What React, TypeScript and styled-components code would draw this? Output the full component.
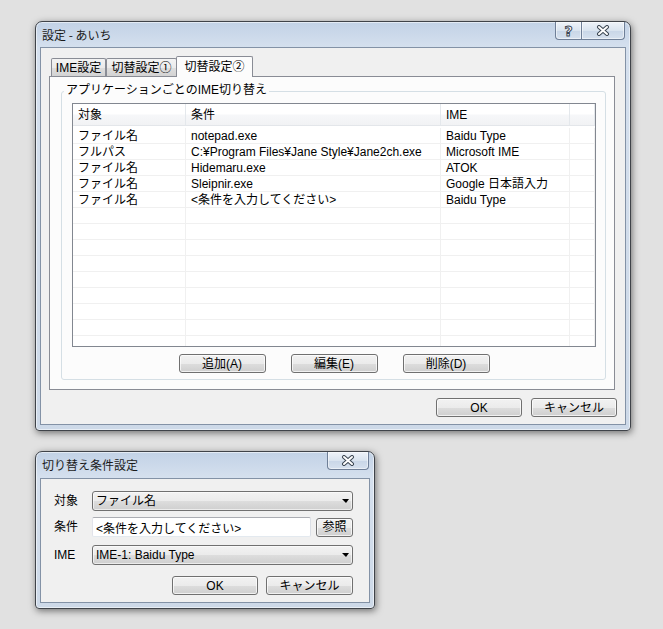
import React from "react";
import styled, { createGlobalStyle } from "styled-components";

const GlobalStyle = createGlobalStyle`
  * { box-sizing: border-box; }
  html, body { margin: 0; padding: 0; background: #e1e1e1; }
  body {
    font-family: "Liberation Sans", "Noto Sans CJK JP", sans-serif;
    font-size: 12px;
    line-height: 14px;
    color: #000;
  }
`;

const Desktop = styled.div`
  min-height: 629px;
  padding: 21px 0 0 35px;
  display: flex;
  flex-direction: column;
  align-items: flex-start;
  gap: 20px;
`;

const Window = styled.div<{ $width: number; $height: number }>`
  width: ${(p) => p.$width}px;
  height: ${(p) => p.$height}px;
  flex: none;
  display: flex;
  flex-direction: column;
  padding: 0 4px 5px;
  border: 1px solid #3f4349;
  border-radius: 7px 7px 4px 4px;
  background: linear-gradient(to bottom, #c2d2e6 0px, #d5e0ee 26px, #cdd9e8 100%);
  box-shadow: inset 0 0 0 1px rgba(255, 255, 255, 0.55), 1px 2px 7px rgba(0, 0, 0, 0.5);
`;

const TitleBar = styled.div<{ $height: number }>`
  height: ${(p) => p.$height}px;
  flex: none;
  display: flex;
  align-items: center;
`;

const Title = styled.div`
  flex: 1;
  padding-left: 2px;
  font-family: "Noto Sans CJK JP", sans-serif;
  font-size: 12px;
  line-height: 16px;
  color: #1b1b1b;
`;

const Captions = styled.div`
  align-self: flex-start;
  display: flex;
  margin-right: 1px;
`;

const CaptionButton = styled.div<{ $width: number; $round: "left" | "right" | "both" }>`
  width: ${(p) => p.$width}px;
  height: 18px;
  display: flex;
  align-items: center;
  justify-content: center;
  border: 1px solid #6f7f97;
  border-top: none;
  border-left-width: ${(p) => (p.$round === "right" ? 0 : 1)}px;
  border-radius: ${(p) =>
    p.$round === "left" ? "0 0 0 4px" : p.$round === "right" ? "0 0 4px 0" : "0 0 4px 4px"};
  background: linear-gradient(to bottom, #eef3f9 0%, #dae4ef 50%, #c9d6e7 51%, #d6e1ee 100%);
  box-shadow: inset 0 0 0 1px rgba(255, 255, 255, 0.5);
`;

const HelpGlyph = styled.span`
  font-family: "DejaVu Sans", sans-serif;
  font-weight: bold;
  font-size: 14px;
  line-height: 14px;
  color: #fff;
  -webkit-text-stroke: 1px #3d4754;
`;

const Client = styled.div<{ $pad: string }>`
  flex: 1;
  min-height: 0;
  display: flex;
  flex-direction: column;
  background: #f0f0f0;
  border: 1px solid #8392a6;
  padding: ${(p) => p.$pad};
`;

const TabStrip = styled.div`
  height: 20px;
  flex: none;
  display: flex;
  align-items: flex-end;
  padding-left: 2px;
`;

const Tab = styled.div<{ $active?: boolean; $width: number }>`
  width: ${(p) => p.$width}px;
  height: ${(p) => (p.$active ? 21 : 18)}px;
  margin-bottom: ${(p) => (p.$active ? -1 : 0)}px;
  margin-left: ${(p) => (p.$active ? -1 : 0)}px;
  padding-top: ${(p) => (p.$active ? 0 : 1)}px;
  position: relative;
  z-index: ${(p) => (p.$active ? 1 : 0)};
  display: flex;
  align-items: center;
  justify-content: center;
  border: 1px solid #898c95;
  border-bottom: none;
  border-radius: 2px 2px 0 0;
  white-space: nowrap;
  background: ${(p) =>
    p.$active
      ? "#fcfcfc"
      : "linear-gradient(to bottom, #f3f3f3 0%, #ebebeb 50%, #dedede 51%, #d3d3d3 100%)"};
`;

const TabPanel = styled.div`
  flex: 1;
  min-height: 0;
  display: flex;
  flex-direction: column;
  margin-right: 2px;
  border: 1px solid #898c95;
  background: #fcfcfc;
  padding: 14px 8px 9px 11px;
`;

const GroupBox = styled.div`
  flex: 1;
  min-height: 0;
  display: flex;
  flex-direction: column;
  border: 1px solid #d5dfe5;
  border-radius: 3px;
  padding: 0 9px 6px 2px;
`;

const GroupLabel = styled.div`
  align-self: flex-start;
  margin-top: -9px;
  padding: 0 2px;
  line-height: 14px;
  background: #fcfcfc;
`;

const ListView = styled.div`
  flex: 1;
  min-height: 0;
  margin: 6px 0 0 8px;
  display: flex;
  flex-direction: column;
  border: 1px solid #828790;
  background: #fff;
  overflow: hidden;
`;

const columns = "113px 255px 129px 1fr";

const HeaderRow = styled.div`
  height: 22px;
  flex: none;
  display: grid;
  grid-template-columns: ${columns};
  background: linear-gradient(to bottom, #ffffff 0%, #ffffff 45%, #f6f7f9 55%, #f1f2f4 100%);
  border-bottom: 1px solid #e3e6ea;
`;

const HeaderCell = styled.div`
  display: flex;
  align-items: center;
  padding-left: 5px;
  border-right: 1px solid #e4e8ec;
`;

const Body = styled.div`
  flex: 1;
  min-height: 0;
  padding-top: 2px;
  overflow: hidden;
`;

const Row = styled.div`
  height: 16px;
  display: grid;
  grid-template-columns: ${columns};
  border-bottom: 1px solid #f0f0f0;
`;

const Cell = styled.div`
  padding-left: 5px;
  line-height: 16px;
  white-space: nowrap;
  overflow: hidden;
  border-right: 1px solid #f0f0f0;
`;

const ButtonRow = styled.div<{ $justify: string; $gap: number; $top: number; $left?: number }>`
  flex: none;
  display: flex;
  justify-content: ${(p) => p.$justify};
  gap: ${(p) => p.$gap}px;
  margin-top: ${(p) => p.$top}px;
  margin-left: ${(p) => p.$left ?? 0}px;
`;

const Button = styled.div<{ $width: number }>`
  width: ${(p) => p.$width}px;
  height: 19px;
  flex: none;
  display: flex;
  align-items: center;
  justify-content: center;
  border: 1px solid #707070;
  border-radius: 3px;
  background: linear-gradient(to bottom, #f2f2f2 0%, #ebebeb 50%, #dddddd 51%, #cfcfcf 100%);
  box-shadow: inset 0 0 0 1px rgba(255, 255, 255, 0.7);
  white-space: nowrap;
`;

const Field = styled.div<{ $top: number }>`
  display: grid;
  grid-template-columns: 38px 1fr;
  align-items: center;
  height: 20px;
  flex: none;
  margin-top: ${(p) => p.$top}px;
`;

const FieldLabel = styled.div`
  line-height: 14px;
`;

const Combo = styled.div`
  height: 20px;
  display: flex;
  align-items: center;
  justify-content: space-between;
  padding: 0 3px 0 3px;
  border: 1px solid #707070;
  border-radius: 3px;
  background: linear-gradient(to bottom, #f2f2f2 0%, #ebebeb 50%, #dddddd 51%, #cfcfcf 100%);
  box-shadow: inset 0 0 0 1px rgba(255, 255, 255, 0.6);
`;

const ComboArrow = styled.span`
  width: 0;
  height: 0;
  border-left: 4px solid transparent;
  border-right: 3px solid transparent;
  border-top: 4px solid #000;
`;

const InputLine = styled.div`
  display: flex;
  align-items: center;
  gap: 5px;
`;

const TextBox = styled.input`
  flex: 1;
  min-width: 0;
  height: 20px;
  padding: 0 3px;
  font: inherit;
  color: #000;
  background: #fff;
  border: 1px solid;
  border-color: #abadb3 #dbdfe6 #e3e9ef #e2e3ea;
  border-radius: 2px;
  outline: none;
`;

const CloseGlyph = () => (
  <svg width="14" height="11" viewBox="0 0 14 11">
    <path d="M3 2 L11 9 M11 2 L3 9" stroke="#3b4652" strokeWidth="4" strokeLinecap="round" fill="none" />
    <path d="M3 2 L11 9 M11 2 L3 9" stroke="#ffffff" strokeWidth="2" strokeLinecap="round" fill="none" />
  </svg>
);

const rows: [string, string, string][] = [
  ["ファイル名", "notepad.exe", "Baidu Type"],
  ["フルパス", "C:¥Program Files¥Jane Style¥Jane2ch.exe", "Microsoft IME"],
  ["ファイル名", "Hidemaru.exe", "ATOK"],
  ["ファイル名", "Sleipnir.exe", "Google 日本語入力"],
  ["ファイル名", "<条件を入力してください>", "Baidu Type"],
];

const emptyRows = 10;

export default function App() {
  return (
    <>
      <GlobalStyle />
      <Desktop>
        <Window $width={596} $height={410}>
          <TitleBar $height={25}>
            <Title>設定 - あいち</Title>
            <Captions>
              <CaptionButton $width={27} $round="left">
                <HelpGlyph>?</HelpGlyph>
              </CaptionButton>
              <CaptionButton $width={43} $round="right">
                <CloseGlyph />
              </CaptionButton>
            </Captions>
          </TitleBar>
          <Client $pad="8px 8px 7px 8px">
            <TabStrip>
              <Tab $width={55}>IME設定</Tab>
              <Tab $width={71}>切替設定①</Tab>
              <Tab $width={77} $active>
                切替設定②
              </Tab>
            </TabStrip>
            <TabPanel>
              <GroupBox>
                <GroupLabel>アプリケーションごとのIME切り替え</GroupLabel>
                <ListView>
                  <HeaderRow>
                    <HeaderCell>対象</HeaderCell>
                    <HeaderCell>条件</HeaderCell>
                    <HeaderCell>IME</HeaderCell>
                    <HeaderCell />
                  </HeaderRow>
                  <Body>
                    {rows.map(([target, cond, ime], i) => (
                      <Row key={i}>
                        <Cell>{target}</Cell>
                        <Cell>{cond}</Cell>
                        <Cell>{ime}</Cell>
                        <Cell />
                      </Row>
                    ))}
                    {Array.from({ length: emptyRows }).map((_, i) => (
                      <Row key={"e" + i}>
                        <Cell />
                        <Cell />
                        <Cell />
                        <Cell />
                      </Row>
                    ))}
                  </Body>
                </ListView>
                <ButtonRow $justify="center" $gap={25} $top={7} $left={8}>
                  <Button $width={87}>追加(A)</Button>
                  <Button $width={87}>編集(E)</Button>
                  <Button $width={87}>削除(D)</Button>
                </ButtonRow>
              </GroupBox>
            </TabPanel>
            <ButtonRow $justify="flex-end" $gap={9} $top={8}>
              <Button $width={86}>OK</Button>
              <Button $width={86}>キャンセル</Button>
            </ButtonRow>
          </Client>
        </Window>

        <Window $width={340} $height={158}>
          <TitleBar $height={26}>
            <Title>切り替え条件設定</Title>
            <Captions>
              <CaptionButton $width={42} $round="both">
                <CloseGlyph />
              </CaptionButton>
            </Captions>
          </TitleBar>
          <Client $pad="12px 16px 7px 13px">
            <Field $top={0}>
              <FieldLabel>対象</FieldLabel>
              <Combo>
                <span>ファイル名</span>
                <ComboArrow />
              </Combo>
            </Field>
            <Field $top={6}>
              <FieldLabel>条件</FieldLabel>
              <InputLine>
                <TextBox readOnly value="<条件を入力してください>" />
                <Button $width={37}>参照</Button>
              </InputLine>
            </Field>
            <Field $top={8}>
              <FieldLabel>IME</FieldLabel>
              <Combo>
                <span>IME-1: Baidu Type</span>
                <ComboArrow />
              </Combo>
            </Field>
            <ButtonRow $justify="flex-end" $gap={8} $top={11}>
              <Button $width={86}>OK</Button>
              <Button $width={87}>キャンセル</Button>
            </ButtonRow>
          </Client>
        </Window>
      </Desktop>
    </>
  );
}
